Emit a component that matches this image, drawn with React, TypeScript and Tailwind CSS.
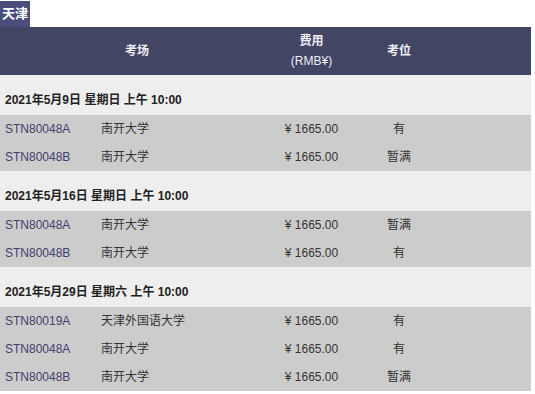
import React from "react";

type Row = { code: string; name: string; seat: string };
const groups: { date: string; rows: Row[] }[] = [
  {
    date: "2021年5月9日 星期日 上午 10:00",
    rows: [
      { code: "STN80048A", name: "南开大学", seat: "有" },
      { code: "STN80048B", name: "南开大学", seat: "暂满" },
    ],
  },
  {
    date: "2021年5月16日 星期日 上午 10:00",
    rows: [
      { code: "STN80048A", name: "南开大学", seat: "暂满" },
      { code: "STN80048B", name: "南开大学", seat: "有" },
    ],
  },
  {
    date: "2021年5月29日 星期六 上午 10:00",
    rows: [
      { code: "STN80019A", name: "天津外国语大学", seat: "有" },
      { code: "STN80048A", name: "南开大学", seat: "有" },
      { code: "STN80048B", name: "南开大学", seat: "暂满" },
    ],
  },
];

export default function App() {
  return (
    <div
      className="w-[535px] h-[394px] bg-white"
      style={{ fontFamily: '"Liberation Sans", Arial, "Noto Sans CJK SC", sans-serif' }}
    >
      <div className="pt-[1px]">
        <div className="inline-flex h-[26px] w-[30px] items-center justify-center bg-[#4b4e7c] text-[13px] font-bold text-white">
          天津
        </div>
      </div>
      <table className="w-[531px] table-fixed border-collapse text-[12px]">
        <colgroup>
          <col className="w-[96px]" />
          <col className="w-[178px]" />
          <col className="w-[75px]" />
          <col className="w-[100px]" />
          <col />
        </colgroup>
        <thead>
          <tr className="h-[48px] bg-[#424563] text-[#eeeef8]">
            <th colSpan={2} className="text-center font-bold">考场</th>
            <th className="text-center leading-[20px]">
              <div className="font-bold">费用</div>
              <div className="font-normal">(RMB¥)</div>
            </th>
            <th className="text-center font-bold">考位</th>
            <th></th>
          </tr>
        </thead>
        <tbody>
          {groups.map((g, gi) => (
            <React.Fragment key={gi}>
              <tr className="h-[40px] bg-[#eeeeee]">
                <td colSpan={5} className="pl-[5px] pt-[10px] font-bold text-[#222222]">
                  {g.date}
                </td>
              </tr>
              {g.rows.map((r, ri) => (
                <tr key={ri} className="h-[28px] bg-[#cccccc]">
                  <td className="pl-[5px] text-[#45406e]">{r.code}</td>
                  <td className="pl-[5px] text-[#333333]">{r.name}</td>
                  <td className="text-center text-[#333333]">¥ 1665.00</td>
                  <td className="text-center text-[#333333]">{r.seat}</td>
                  <td></td>
                </tr>
              ))}
            </React.Fragment>
          ))}
        </tbody>
      </table>
    </div>
  );
}
